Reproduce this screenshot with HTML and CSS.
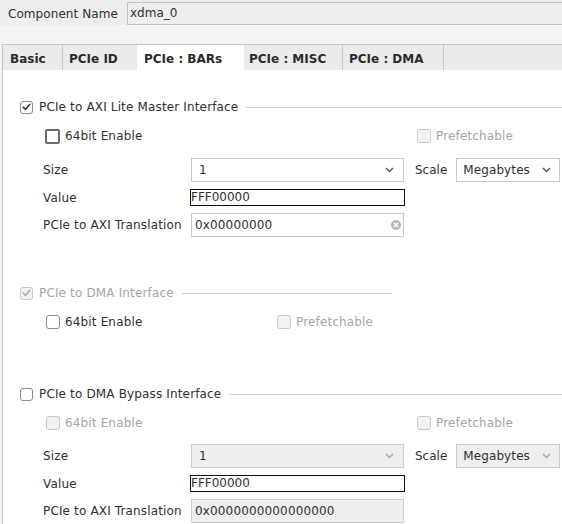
FILE: index.html
```html
<!DOCTYPE html>
<html>
<head>
<meta charset="utf-8">
<link rel="stylesheet" href="styles.css">
</head>
<body>
<div class="name-row">
  <span class="name-label">Component Name</span>
  <div class="name-field">xdma_0</div>
</div>
<div class="below">
  <div class="panel">
    <div class="tabs">
      <div class="tab t1">Basic</div>
      <div class="tab t2">PCIe ID</div>
      <div class="tab t3 active">PCIe : BARs</div>
      <div class="tab t4">PCIe : MISC</div>
      <div class="tab t5">PCIe : DMA</div>
      <div class="tab-fill"></div>
    </div>
    <div class="content">
      <section class="group g1">
        <div class="head">
          <span class="cb cb-sm"><svg viewBox="0 0 12 12"><path d="M2.4 6.1 L4.9 8.6 L9.5 3.2"/></svg></span>
          <span class="head-text">PCIe to AXI Lite Master Interface</span>
          <span class="rule"></span>
        </div>
        <div class="checks">
          <div class="check first wide"><span class="cb focus"></span>64bit Enable</div>
          <div class="check disabled"><span class="cb dis"></span>Prefetchable</div>
        </div>
        <div class="form">
          <div class="row row-tall">
            <span class="lbl">Size</span>
            <div class="combo size-combo"><span>1</span><svg class="chev" viewBox="0 0 9 6"><path d="M1 1 L4.5 4.5 L8 1"/></svg></div>
            <span class="scale">Scale</span>
            <div class="combo scale-combo"><span>Megabytes</span><svg class="chev" viewBox="0 0 9 6"><path d="M1 1 L4.5 4.5 L8 1"/></svg></div>
          </div>
          <div class="row row-value">
            <span class="lbl">Value</span>
            <div class="value-field">FFF00000</div>
          </div>
          <div class="row row-tall">
            <span class="lbl">PCIe to AXI Translation</span>
            <div class="text-field"><span>0x00000000</span><svg class="clear" viewBox="0 0 10 10"><circle cx="5" cy="5" r="5"/><path d="M3 3 L7 7 M7 3 L3 7"/></svg></div>
          </div>
        </div>
      </section>

      <section class="group g2">
        <div class="head narrow">
          <span class="cb cb-sm dis"><svg viewBox="0 0 12 12"><path d="M2.4 6.1 L4.9 8.6 L9.5 3.2"/></svg></span>
          <span class="head-text muted">PCIe to DMA Interface</span>
          <span class="rule"></span>
        </div>
        <div class="checks">
          <div class="check first short"><span class="cb"></span>64bit Enable</div>
          <div class="check disabled"><span class="cb dis"></span>Prefetchable</div>
        </div>
      </section>

      <section class="group g3">
        <div class="head">
          <span class="cb cb-sm"></span>
          <span class="head-text">PCIe to DMA Bypass Interface</span>
          <span class="rule"></span>
        </div>
        <div class="checks">
          <div class="check first wide disabled"><span class="cb dis"></span>64bit Enable</div>
          <div class="check disabled"><span class="cb dis"></span>Prefetchable</div>
        </div>
        <div class="form">
          <div class="row row-tall">
            <span class="lbl">Size</span>
            <div class="combo size-combo off"><span>1</span><svg class="chev" viewBox="0 0 9 6"><path d="M1 1 L4.5 4.5 L8 1"/></svg></div>
            <span class="scale">Scale</span>
            <div class="combo scale-combo off"><span>Megabytes</span><svg class="chev" viewBox="0 0 9 6"><path d="M1 1 L4.5 4.5 L8 1"/></svg></div>
          </div>
          <div class="row row-value">
            <span class="lbl">Value</span>
            <div class="value-field">FFF00000</div>
          </div>
          <div class="row row-tall">
            <span class="lbl">PCIe to AXI Translation</span>
            <div class="text-field off"><span>0x0000000000000000</span></div>
          </div>
        </div>
      </section>
    </div>
  </div>
</div>
</body>
</html>
```

FILE: styles.css
```css
* { box-sizing: border-box; }
html, body { margin: 0; padding: 0; }
body {
  width: 562px;
  height: 524px;
  overflow: hidden;
  background: #f4f4f4;
  font-family: "DejaVu Sans", "Noto Sans", sans-serif;
  font-size: 12px;
  color: #303030;
}

.name-row {
  display: flex;
  align-items: center;
  height: 25px;
  padding: 2px 0 0 8px;
  background: #eeeeee;
}
.name-label { width: 119px; flex: none; letter-spacing: 0.07px; }
.name-field {
  flex: 1;
  height: 23px;
  margin-right: -10px;
  border: 1px solid #c4c4c4;
  background: #eeeeee;
  padding-left: 2px;
  line-height: 21px;
}

.below {
  height: 499px;
  padding: 19px 0 0 2px;
  display: flex;
}
.panel {
  flex: 1;
  border-top: 1px solid #c6c6c6;
  border-left: 1px solid #c6c6c6;
  background: #ffffff;
  display: flex;
  flex-direction: column;
}

.tabs {
  display: flex;
  height: 25px;
  background: #ebebeb;
  flex: none;
}
.tab {
  height: 25px;
  padding-top: 3px;
  line-height: 22px;
  font-weight: bold;
  color: #2b2b2b;
  white-space: nowrap;
}
.t1 { width: 60px; padding-left: 7px; border-right: 1px solid #c8c8c8; }
.t2 { width: 74px; padding-left: 6px; }
.t3 { width: 107px; padding-left: 7px; }
.t4 { width: 99px; padding-left: 5px; border-right: 1px solid #c8c8c8; }
.t5 { width: 101px; padding-left: 6px; border-right: 1px solid #c8c8c8; }
.tab.active { background: #ffffff; }
.tab-fill { flex: 1; }

.content {
  flex: 1;
  padding-left: 17px;
  letter-spacing: 0.15px;
}

.head {
  display: flex;
  align-items: center;
  height: 16px;
}
.head.narrow { width: 372px; }
.head-text { margin-left: 6px; white-space: nowrap; }
.muted { color: #a6a6a6; }
.rule {
  flex: 1;
  align-self: flex-start;
  height: 1px;
  margin: 8px 0 0 8px;
  background: #cfcfcf;
}

.cb {
  flex: none;
  width: 14px;
  height: 14px;
  border: 1px solid #8c8c8c;
  border-radius: 3px;
  background: #ffffff;
  display: flex;
  align-items: center;
  justify-content: center;
}
.cb svg { width: 12px; height: 12px; }
.cb path { fill: none; stroke: #3c3c3c; stroke-width: 1.8; stroke-linecap: round; stroke-linejoin: round; }
.cb-sm { width: 13px; height: 13px; }
.cb.dis { border-color: #c9c9c9; background: #f2f2f2; }
.cb.dis path { stroke: #b0b0b0; }
.cb.focus {
  width: 15px;
  height: 15px;
  margin-left: -1px;
  border: 2px solid #6c6c6c;
  border-radius: 2px;
}

.checks {
  display: flex;
  align-items: center;
  height: 16px;
  padding-left: 26px;
}
.check {
  display: flex;
  align-items: center;
  gap: 5px;
  white-space: nowrap;
}
.check.wide { width: 371px; }
.check.short { width: 231px; }
.check.disabled { color: #a6a6a6; }

.form {
  display: flex;
  flex-direction: column;
  gap: 7px;
}
.row {
  display: flex;
  align-items: center;
}
.row-tall { height: 24px; }
.row-value { height: 17px; }
.lbl {
  flex: none;
  width: 171px;
  padding-left: 23px;
  white-space: nowrap;
}

.combo {
  flex: none;
  height: 24px;
  border: 1px solid #c8c8c8;
  background: #ffffff;
  display: flex;
  align-items: center;
  justify-content: space-between;
}
.size-combo { width: 213px; padding: 0 9px 0 7px; }
.scale-combo { width: 104px; padding: 0 8px 0 6px; letter-spacing: 0.1px; }
.combo.off { background: #efefef; border-color: #cdcdcd; }
.chev { width: 9px; height: 6px; }
.chev path { fill: none; stroke: #555555; stroke-width: 1.4; }
.combo.off .chev path { stroke: #a8a8a8; }
.scale { margin: 0 9px 0 11px; letter-spacing: 0; }

.value-field {
  flex: none;
  width: 215px;
  height: 17px;
  margin-left: -1px;
  border: 1px solid #111111;
  background: #ffffff;
  line-height: 15px;
  padding-left: 0;
  letter-spacing: 0;
}

.text-field {
  flex: none;
  width: 213px;
  height: 24px;
  border: 1px solid #c8c8c8;
  background: #ffffff;
  display: flex;
  align-items: center;
  justify-content: space-between;
  padding: 0 2px 0 3px;
}
.text-field.off { background: #efefef; border-color: #cdcdcd; }
.clear { width: 10px; height: 10px; }
.clear circle { fill: #b8b8b8; }
.clear path { stroke: #ffffff; stroke-width: 1.5; }

.g1 .head { margin-top: 29px; }
.g1 .checks { margin-top: 13px; }
.g1 .form { margin-top: 14px; }
.g2 .head { margin-top: 48px; }
.g2 .checks { margin-top: 13px; }
.g3 .head { margin-top: 56px; }
.g3 .checks { margin-top: 13px; }
.g3 .form { margin-top: 13px; }
```
